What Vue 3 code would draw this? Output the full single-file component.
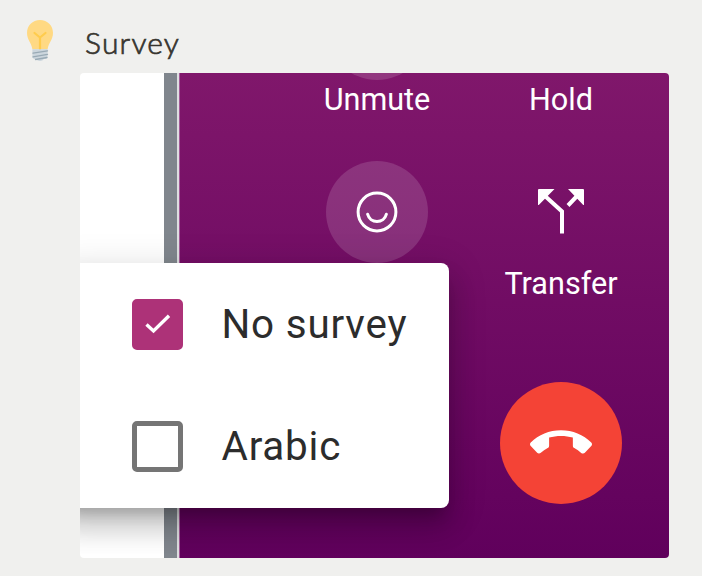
<template>
  <div class="page">

    <!-- TITLE -->
    <div class="title">
      <svg class="bulb" viewBox="0 0 28 42" width="28" height="42">
        <path d="M14 0C6.500 0 1 5.600 1 12.800c0 7.200 4.200 9.200 5.400 16.500h15.200C22.800 22 27 20 27 12.800 27 5.600 21.500 0 14 0z" fill="#ffd983" />
        <path d="M8.500 13l5.500 4.500 5.500-4.500M14 17.500v11.800" fill="none" stroke="#ffcc4d" stroke-width="2.200" stroke-linecap="round" stroke-linejoin="round" />
        <path d="M6.400 29.300h15.200v7.300c0 1.400-1 2.400-2.400 2.400h-1.400c-.6 1.200-2 2-3.800 2s-3.200-.8-3.800-2H8.800c-1.400 0-2.400-1-2.400-2.400z" fill="#ccd6dd" />
        <path d="M7 33.200l14.500-2.400M7 36.800l14.500-2.400M9.500 39.500l11.500-2" fill="none" stroke="#99aab5" stroke-width="1.300" stroke-linecap="round" />
      </svg>
      <h2>Survey</h2>
    </div>

    <div class="shot">
      <div class="backdrop"></div>
      <div class="divider"></div>

      <!-- CALL CONTROLS -->
      <div class="phone">
        <div v-for="action in actions" :key="action.id" class="action">
          <div :class="['circle', action.type]">
            <svg v-if="action.id === 'feedback'" viewBox="0 0 42 42" width="42" height="42" fill="none" stroke="#fff" stroke-linecap="round">
              <circle cx="21" cy="21" r="18.900" stroke-width="3" />
              <path d="M11.600 23.200a9.700 9.700 0 0 0 18.800 0" stroke-width="3" />
            </svg>
            <svg v-if="action.id === 'transfer'" class="split" viewBox="0 0 48 46" width="48" height="46">
              <path d="M2 1h15.500L2 16.800Q1 17.500 1 16.500V2Q1 1 2 1zM46 1H31l15 15.800q1 .7 1-.3V2q0-1-1-1z" fill="#fff" />
              <path d="M8 8l17 15.500V45.500M41 7L31 17.500" fill="none" stroke="#fff" stroke-width="4" />
            </svg>
            <svg v-if="action.id === 'hangup'" class="handset" viewBox="0 0 24 9.200" width="62" height="24">
              <path d="M12 1.850c-1.600 0-3.150.2-4.600.62v3.200c0 .39-.23.740-.560.900-.980.490-1.870 1.120-2.660 1.850-.180.180-.430.280-.700.280-.280 0-.530-.110-.710-.290L.290 5.780C.110 5.610 0 5.360 0 5.080c0-.28.110-.53.290-.71C3.340 1.480 7.460-.3 12-.3s8.660 1.780 11.710 4.670c.180.180.290.430.290.710 0 .28-.110.530-.290.710l-2.480 2.630c-.180.180-.430.290-.710.290-.270 0-.520-.110-.700-.280-.790-.740-1.690-1.360-2.670-1.850-.330-.160-.560-.500-.560-.900v-3.200C15.150 2.050 13.600 1.850 12 1.850z" fill="#fff" />
            </svg>
          </div>
          <span v-if="action.label" class="label">{{ action.label }}</span>
        </div>
      </div>

      <!-- SURVEY MENU -->
      <div class="menu">
        <div v-for="option in options" :key="option.name" class="option" @click="option.checked = !option.checked">
          <span :class="['checkbox', option.checked ? 'checked' : '']">
            <svg v-if="option.checked" viewBox="0 0 26 20" width="26" height="20">
              <path d="M1.500 10.500l7 6.500L24 1.800" fill="none" stroke="#fff" stroke-width="3.400" />
            </svg>
          </span>
          <span class="name">{{ option.name }}</span>
        </div>
      </div>
    </div>

  </div>
</template>

<script setup>
import { ref } from 'vue'

/* CALL ACTIONS */
const actions = [
  { id: 'mute', label: 'Unmute', type: 'filled' },
  { id: 'hold', label: 'Hold', type: 'plain' },
  { id: 'feedback', label: '', type: 'filled' },
  { id: 'transfer', label: 'Transfer', type: 'plain' },
  { id: 'empty', label: '', type: 'plain' },
  { id: 'hangup', label: '', type: 'end' }
]

/* SURVEY OPTIONS */
const options = ref([
  { name: 'No survey', checked: true },
  { name: 'Arabic', checked: false }
])
</script>

<style>
body {
  margin: 0;
  background: #f0f0ee;
}
</style>

<style scoped>
.page {
  box-sizing: border-box;
  height: 576px;
  padding: 0 33px 18px 26px;
  overflow: hidden;
  background: #f0f0ee;
}

/* TITLE */
.title {
  height: 73px;
  display: flex;
  align-items: flex-start;
  gap: 31px;
}

.bulb {
  flex: none;
  margin-top: 20px;
}

h2 {
  margin: 22px 0 0;
  font: 300 30px/40px Lato, sans-serif;
  letter-spacing: 1.200px;
  color: #37352f;
  -webkit-text-stroke: 0.7px #37352f;
}

/* SCREEN */
.shot {
  position: relative;
  width: 589px;
  height: 485px;
  margin-left: 54px;
  display: flex;
  overflow: hidden;
  border-radius: 4px;
  background: white;
}

.backdrop {
  width: 84px;
}

.divider {
  width: 13px;
  border-right: 2px solid #dedfe1;
  margin-right: 1px;
  background: #80868d;
}

/* CONTROLS */
.phone {
  box-sizing: border-box;
  flex: 1;
  height: 485px;
  padding-left: 105px;
  display: grid;
  grid-template-columns: 184px 184px;
  grid-template-rows: 183.5px 183.5px 183.5px;
  align-content: start;
  background: linear-gradient(#80176b, #60005c);
  box-shadow: -1px 0 #a45b98;
}

.action {
  display: flex;
  flex-direction: column;
  align-items: center;
  margin-top: -95.500px;
  margin-bottom: 95.500px;
}

.circle {
  flex: none;
  width: 102px;
  height: 102px;
  display: flex;
  align-items: center;
  justify-content: center;
  border-radius: 50%;
}

.filled {
  background: rgba(255, 255, 255, 0.14);
}

.end {
  width: 122.500px;
  height: 122.500px;
  margin-top: 37px;
  background: #f44336;
}

.split {
  margin-bottom: 2px;
}

.handset {
  overflow: visible;
}

.label {
  margin-top: 2.600px;
  font: 400 30.600px/36px Roboto, sans-serif;
  color: white;
}

/* MENU */
.menu {
  position: absolute;
  left: -20px;
  top: 190px;
  width: 388.500px;
  height: 245px;
  border-radius: 8px;
  background: white;
  box-shadow:
    0 13px 13px -8px rgba(0, 0, 0, 0.2),
    0 20px 26px 3px rgba(0, 0, 0, 0.14),
    0 8px 36px 5px rgba(0, 0, 0, 0.12);
}

.option {
  height: 122.500px;
  padding-left: 72px;
  display: flex;
  align-items: center;
  gap: 38.500px;
  cursor: pointer;
}

.checkbox {
  box-sizing: border-box;
  width: 51px;
  height: 51px;
  display: flex;
  align-items: center;
  justify-content: center;
  border: 5px solid #757575;
  border-radius: 5px;
}

.checked {
  border-color: #ad3278;
  background: #ad3278;
}

.name {
  margin-top: 1px;
  font: 400 40.400px/48px Roboto, sans-serif;
  letter-spacing: 0.800px;
  color: #2c2c2c;
}
</style>
